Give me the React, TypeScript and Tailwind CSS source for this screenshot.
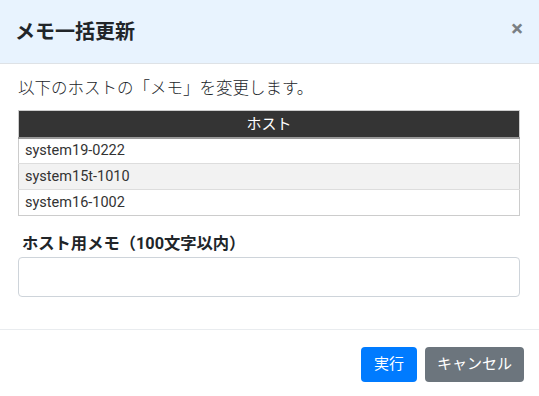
const HOSTS = ['system19-0222', 'system15t-1010', 'system16-1002'];

export default function App() {
  return (
    <div
      className="w-[539px] h-[396px] bg-white text-[#212529] overflow-hidden flex flex-col"
      style={{ fontFamily: 'Roboto, "Noto Sans CJK JP", sans-serif' }}
    >
      {/* Header */}
      <div className="h-[64px] shrink-0 bg-[#e8f3fe] border-b border-[#dee2e6] flex items-center justify-between pl-[15px] pr-[16px]">
        <h5 className="text-[20px] font-bold leading-[30px] text-[#212529]">メモ一括更新</h5>
        <button className="text-[22px] leading-none font-bold text-[#7a7f84] -mt-[5px]">×</button>
      </div>

      {/* Body */}
      <div className="pl-[18px] pr-[19px] pt-[13px] h-[265px] shrink-0">
        <p className="text-[16.5px] leading-[24px] mb-[9px] font-light">以下のホストの「メモ」を変更します。</p>
        <table className="w-full border border-[#cccccc] border-collapse text-[14.5px]">
          <thead>
            <tr className="bg-[#343434] text-white">
              <th className="h-[27px] font-normal text-[15px] text-center border-b-2 border-[#999999]">ホスト</th>
            </tr>
          </thead>
          <tbody>
            {HOSTS.map((h, i) => (
              <tr key={h} className={i % 2 === 1 ? 'bg-[#f2f2f2]' : 'bg-white'}>
                <td className="h-[26px] px-[6px] text-[#333333] border-t border-[#dddddd]">{h}</td>
              </tr>
            ))}
          </tbody>
        </table>
        <label className="block mt-[16px] pl-[4px] text-[16.3px] font-bold leading-[24px]">
          ホスト用メモ（100文字以内）
        </label>
        <input
          type="text"
          className="mt-[1px] w-full h-[40px] rounded-[4px] border border-[#ced4da] px-3 outline-none"
        />
      </div>

      {/* Footer */}
      <div className="border-t border-[#e9ecef] flex justify-end items-center gap-[8px] pr-[15px] pt-[17px]">
        <button className="h-[35px] w-[56px] rounded-[4px] bg-[#007bff] text-white text-[15px]">実行</button>
        <button className="h-[35px] w-[99px] rounded-[4px] bg-[#6c757d] text-white text-[15px]">キャンセル</button>
      </div>
    </div>
  );
}
